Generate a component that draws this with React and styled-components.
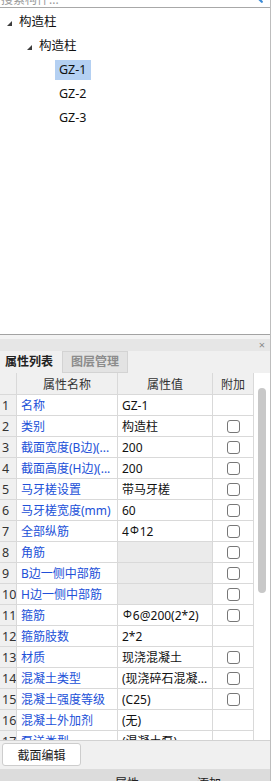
import React from 'react';
import styled, { createGlobalStyle } from 'styled-components';

const GlobalStyle = createGlobalStyle`
  html, body {
    margin: 0;
    padding: 0;
    background: #fff;
  }
  body {
    font-family: "Noto Sans", "Noto Sans CJK SC", sans-serif;
    font-size: 12px;
    color: #1a1a1a;
  }
  * { box-sizing: border-box; }
`;

const treeData = [
  { id: 'root', label: '构造柱', level: 0, open: true },
  { id: 'sub', label: '构造柱', level: 1, open: true },
  { id: 'gz1', label: 'GZ-1', level: 2, selected: true },
  { id: 'gz2', label: 'GZ-2', level: 2 },
  { id: 'gz3', label: 'GZ-3', level: 2 },
];

// value: string or { pre, post } around the rebar grade mark
// check: has a checkbox, locked: grey value cell
const rows = [
  { name: '名称', value: 'GZ-1' },
  { name: '类别', value: '构造柱', check: true },
  { name: '截面宽度(B边)(...', value: '200', check: true },
  { name: '截面高度(H边)(...', value: '200', check: true },
  { name: '马牙槎设置', value: '带马牙槎', check: true },
  { name: '马牙槎宽度(mm)', value: '60', check: true },
  { name: '全部纵筋', value: { pre: '4', post: '12' }, check: true },
  { name: '角筋', value: '', check: true, locked: true },
  { name: 'B边一侧中部筋', value: '', check: true, locked: true },
  { name: 'H边一侧中部筋', value: '', check: true, locked: true },
  { name: '箍筋', value: { pre: '', post: '6@200(2*2)' }, check: true },
  { name: '箍筋肢数', value: '2*2' },
  { name: '材质', value: '现浇混凝土', check: true },
  { name: '混凝土类型', value: '(现浇碎石混凝...', check: true },
  { name: '混凝土强度等级', value: '(C25)', check: true },
  { name: '混凝土外加剂', value: '(无)' },
  { name: '泵送类型', value: '(混凝土泵)' },
];

export default function App() {
  return (
    <>
      <GlobalStyle />
      <Page>
        <SearchBox>
          <SearchText>搜索构件...</SearchText>
          <SearchIcon width="14" height="14" viewBox="0 0 14 14">
            <circle cx="5.5" cy="5.5" r="4.2" fill="none" stroke="#3a8ad6" strokeWidth="1.6" />
            <line x1="8.6" y1="8.6" x2="12.8" y2="12.8" stroke="#3a8ad6" strokeWidth="2.2" strokeLinecap="round" />
          </SearchIcon>
        </SearchBox>

        <TreePanel>
          {treeData.map((n) => (
            <TreeRow key={n.id} $level={n.level}>
              <Toggle>{n.open && <Caret />}</Toggle>
              <TreeLabel $selected={n.selected}>{n.label}</TreeLabel>
            </TreeRow>
          ))}
        </TreePanel>

        <Gap />
        <TitleBar>
          <Close>×</Close>
        </TitleBar>

        <TabStrip>
          <Tab $active>属性列表</Tab>
          <Tab>图层管理</Tab>
        </TabStrip>

        <TableArea>
          <Table>
            <Cell $kind="head" />
            <Cell $kind="head">属性名称</Cell>
            <Cell $kind="head">属性值</Cell>
            <Cell $kind="head">附加</Cell>
            {rows.map((r, i) => (
              <React.Fragment key={i}>
                <Cell $kind="num">{i + 1}</Cell>
                <Cell $kind="name">{r.name}</Cell>
                <Cell $kind="value" $locked={r.locked}>
                  {typeof r.value === 'string' ? (
                    r.value
                  ) : (
                    <>
                      {r.value.pre}
                      <Steel>Φ</Steel>
                      {r.value.post}
                    </>
                  )}
                </Cell>
                <Cell $kind="check">{r.check && <CheckBox />}</Cell>
              </React.Fragment>
            ))}
          </Table>
          <ScrollTrack>
            <Thumb />
          </ScrollTrack>
        </TableArea>

        <ButtonBar>
          <Button>截面编辑</Button>
        </ButtonBar>
        <Footer>
          <span>属性</span>
          <span>添加</span>
        </Footer>
      </Page>
    </>
  );
}

const Page = styled.div`
  width: 271px;
  height: 781px;
  border-right: 1px solid #bdbdbd;
  display: flex;
  flex-direction: column;
  overflow: hidden;
`;

const SearchBox = styled.div`
  height: 8px;
  flex: none;
  border-bottom: 1px solid #a8a8a8;
  display: flex;
  align-items: flex-end;
  justify-content: space-between;
  padding: 0 7px 0 1px;
  overflow: hidden;
`;

const SearchText = styled.span`
  color: #9a9a9a;
  line-height: 12px;
  margin-bottom: 1px;
`;

const SearchIcon = styled.svg`
  flex: none;
  margin-bottom: 4px;
`;

const TreePanel = styled.div`
  height: 327px;
  flex: none;
  padding-top: 2px;
  border-bottom: 1px solid #a3a3a3;
  background: #fff;
`;

const TreeRow = styled.div`
  height: 24px;
  display: flex;
  align-items: center;
  padding-left: ${(p) => 7 + p.$level * 20}px;
`;

const Toggle = styled.span`
  width: 8px;
  height: 24px;
  flex: none;
  display: flex;
  align-items: center;
`;

const Caret = styled.span`
  width: 0;
  height: 0;
  margin-top: 3px;
  border-left: 5px solid transparent;
  border-bottom: 5px solid #3c3c3c;
`;

const TreeLabel = styled.span`
  height: 20px;
  line-height: 20px;
  padding: 0 5px 0 4px;
  color: #111;
  font-size: 12.5px;
  background: ${(p) => (p.$selected ? '#b4d0f2' : 'transparent')};
`;

const Gap = styled.div`
  height: 4px;
  flex: none;
  background: #f3f3f3;
`;

const TitleBar = styled.div`
  height: 12px;
  flex: none;
  background: #e6e6e6;
  display: flex;
  align-items: center;
  justify-content: flex-end;
  padding-right: 5px;
`;

const Close = styled.span`
  font-size: 11px;
  line-height: 12px;
  color: #8a8a8a;
`;

const TabStrip = styled.div`
  height: 22px;
  flex: none;
  background: #f0f0f0;
  display: flex;
`;

const Tab = styled.div`
  line-height: 20px;
  padding: ${(p) => (p.$active ? '0 8px 0 4px' : '0 8px')};
  font-weight: 700;
  color: ${(p) => (p.$active ? '#222' : '#8c8c8c')};
  background: ${(p) => (p.$active ? '#f0f0f0' : '#e3e3e3')};
  border: 1px solid ${(p) => (p.$active ? 'transparent' : '#d3d3d3')};
`;

const TableArea = styled.div`
  height: 367px;
  flex: none;
  display: flex;
  background: #fff;
`;

const Table = styled.div`
  width: 254px;
  display: grid;
  grid-template-columns: 17px 101px 95px 41px;
  grid-template-rows: 22px;
  grid-auto-rows: 21px;
  overflow: hidden;
`;

const cellBg = (p) => {
  if (p.$kind === 'head' || p.$kind === 'num') return '#f0f0f0';
  if (p.$locked) return '#ebebeb';
  return '#fff';
};

const Cell = styled.div`
  border-right: 1px solid #d9d9d9;
  border-bottom: 1px solid #d9d9d9;
  display: flex;
  align-items: center;
  justify-content: ${(p) => (p.$kind === 'head' || p.$kind === 'check' ? 'center' : 'flex-start')};
  padding: 0 ${(p) => (p.$kind === 'num' ? '0 0 2px' : '4px')};
  white-space: nowrap;
  overflow: hidden;
  background: ${cellBg};
  color: ${(p) => (p.$kind === 'name' ? '#2150d8' : p.$kind === 'head' || p.$kind === 'num' ? '#333' : '#111')};
  font-size: ${(p) => (p.$kind === 'num' ? '12.5px' : '12px')};
`;

const Steel = styled.span`
  font-size: 10.5px;
  line-height: 10px;
  align-self: flex-start;
  margin: 4px 1px 0;
`;

const CheckBox = styled.span`
  width: 13px;
  height: 13px;
  border: 1px solid #777;
  border-radius: 3px;
  background: #fff;
`;

const ScrollTrack = styled.div`
  width: 16px;
  flex: none;
  padding-top: 15px;
  display: flex;
  justify-content: center;
`;

const Thumb = styled.div`
  width: 8px;
  height: 205px;
  border-radius: 4px;
  background: #c8c8c8;
`;

const ButtonBar = styled.div`
  height: 29px;
  flex: none;
  border-top: 1px solid #d2d2d2;
  background: #f0f0f0;
  padding: 2px 0 0 2px;
`;

const Button = styled.button`
  width: 79px;
  height: 23px;
  border: 1px solid #cdcdcd;
  border-radius: 3px;
  background: #fff;
  font-family: inherit;
  font-size: 12px;
  color: #1a1a1a;
  padding: 0;
`;

const Footer = styled.div`
  height: 12px;
  flex: none;
  background: #dcdcdc;
  display: flex;
  gap: 58px;
  padding: 8px 0 0 115px;
  line-height: 14px;
  overflow: hidden;
  color: #222;
`;
